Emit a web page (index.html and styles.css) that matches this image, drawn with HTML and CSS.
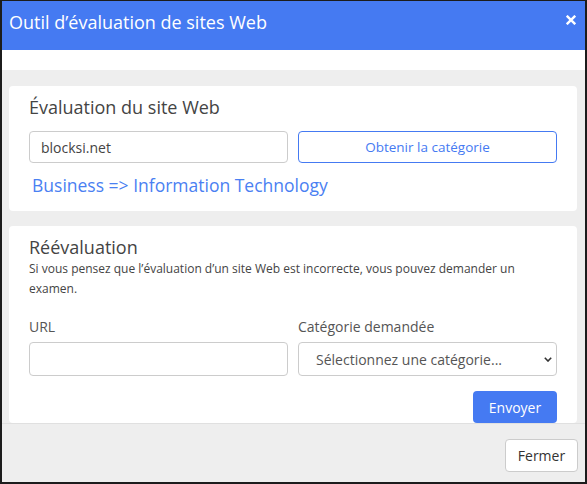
FILE: index.html
```html
<!DOCTYPE html>
<html lang="fr">
<head>
<meta charset="utf-8">
<title>Outil d’évaluation de sites Web</title>
<link rel="stylesheet" href="styles.css">
</head>
<body>
<div class="modal">
  <div class="modal-header">
    <h1 class="modal-title">Outil d’évaluation de sites Web</h1>
    <button class="close" type="button" aria-label="Fermer">
      <svg width="10" height="10" viewBox="0 0 10 10"><path d="M1.6 1.6 L8.4 8.4 M8.4 1.6 L1.6 8.4" stroke="#fff" stroke-width="2.4" stroke-linecap="square" fill="none"/></svg>
    </button>
  </div>
  <div class="spacer"></div>
  <div class="modal-body">
    <section class="card card-eval">
      <h2 class="card-title">Évaluation du site Web</h2>
      <div class="row">
        <input class="field field-sm" type="text" value="blocksi.net">
        <button class="btn btn-outline" type="button">Obtenir la catégorie</button>
      </div>
      <div class="result">Business =&gt; Information Technology</div>
    </section>
    <section class="card card-review">
      <h2 class="card-title">Réévaluation</h2>
      <p class="desc">Si vous pensez que l’évaluation d’un site Web est incorrecte, vous pouvez demander un examen.</p>
      <div class="row row-fields">
        <div class="group">
          <label class="label">URL</label>
          <input class="field" type="text">
        </div>
        <div class="group">
          <label class="label">Catégorie demandée</label>
          <div class="select-wrap">
            <select class="field select">
              <option>Sélectionnez une catégorie...</option>
            </select>
            <svg class="chevron" width="8" height="5" viewBox="0 0 8 5"><path d="M0.8 0.8 L4 4 L7.2 0.8" stroke="#333" stroke-width="1.6" fill="none"/></svg>
          </div>
        </div>
      </div>
      <div class="actions">
        <button class="btn btn-primary" type="button">Envoyer</button>
      </div>
    </section>
  </div>
  <div class="modal-footer">
    <button class="btn btn-default" type="button">Fermer</button>
  </div>
</div>
</body>
</html>
```

FILE: styles.css
```css
* { box-sizing: border-box; }
html, body { margin: 0; padding: 0; }
body {
  font-family: "Open Sans", "Noto Sans", sans-serif;
  color: #444;
  background: #fff;
}
.modal {
  width: 587px;
  height: 484px;
  border-style: solid;
  border-color: #1c1c1c;
  border-width: 1px 2px 2px 2px;
  display: flex;
  flex-direction: column;
  overflow: hidden;
}
.modal-header {
  height: 49px;
  background: #457af2;
  display: flex;
  justify-content: space-between;
  align-items: flex-start;
  padding: 9px 9px 0 7px;
}
.modal-title {
  margin: 0;
  font-size: 18px;
  line-height: 24px;
  font-weight: 400;
  color: #fff;
}
.close {
  border: 0;
  background: none;
  padding: 0;
  margin-top: 5px;
  width: 10px;
  height: 10px;
  display: block;
}
.close svg { display: block; }
.spacer { height: 20px; background: #fff; }
.modal-body {
  background: #eeeeee;
  padding: 16px 8px 0 7px;
  display: flex;
  flex-direction: column;
  gap: 15px;
}
.card {
  background: #fff;
  border-radius: 4px;
  padding: 9px 20px 0 20px;
}
.card-eval { height: 125px; }
.card-review { height: 197px; }
.card-title {
  margin: 0;
  font-size: 18px;
  line-height: 24px;
  font-weight: 400;
  color: #444;
}
.row {
  display: flex;
  gap: 10px;
}
.card-eval .row { margin-top: 12px; }
.field {
  width: 259px;
  height: 34px;
  border: 1px solid #ccc;
  border-radius: 4px;
  font-family: inherit;
  font-size: 14px;
  color: #444;
  padding: 0 11px;
  background: #fff;
  outline: none;
}
.field-sm { height: 32px; }
.btn {
  font-family: inherit;
  font-size: 14px;
  border-radius: 4px;
  cursor: pointer;
  padding: 0;
}
.btn-outline {
  width: 259px;
  height: 32px;
  border: 1px solid #457af2;
  background: #fff;
  color: #457af2;
  font-size: 13.5px;
}
.result {
  margin-top: 10px;
  padding-left: 3px;
  font-size: 17.5px;
  line-height: 24px;
  color: #4a80f2;
}
.desc {
  margin: 0;
  font-size: 12px;
  line-height: 20px;
  color: #444;
}
.row-fields { margin-top: 18px; }
.group {
  display: flex;
  flex-direction: column;
  gap: 5px;
}
.label {
  font-size: 14px;
  line-height: 20px;
  color: #555;
}
.select-wrap { position: relative; width: 259px; }
.select {
  -webkit-appearance: none;
  appearance: none;
  padding-left: 17px;
  color: #555;
}
.chevron {
  position: absolute;
  right: 5px;
  top: 15px;
  pointer-events: none;
}
.actions {
  display: flex;
  justify-content: flex-end;
  margin-top: 15px;
}
.btn-primary {
  width: 84px;
  height: 32px;
  border: 0;
  background: #457af2;
  color: #fff;
  font-weight: 500;
}
.modal-footer {
  flex: 1;
  background: #eeeeee;
  border-top: 1px solid #e0e0e0;
  display: flex;
  justify-content: flex-end;
  align-items: flex-start;
  padding: 15px 7px 0 0;
}
.btn-default {
  width: 73px;
  height: 33px;
  border: 1px solid #ccc;
  background: #fff;
  color: #333;
}
```
